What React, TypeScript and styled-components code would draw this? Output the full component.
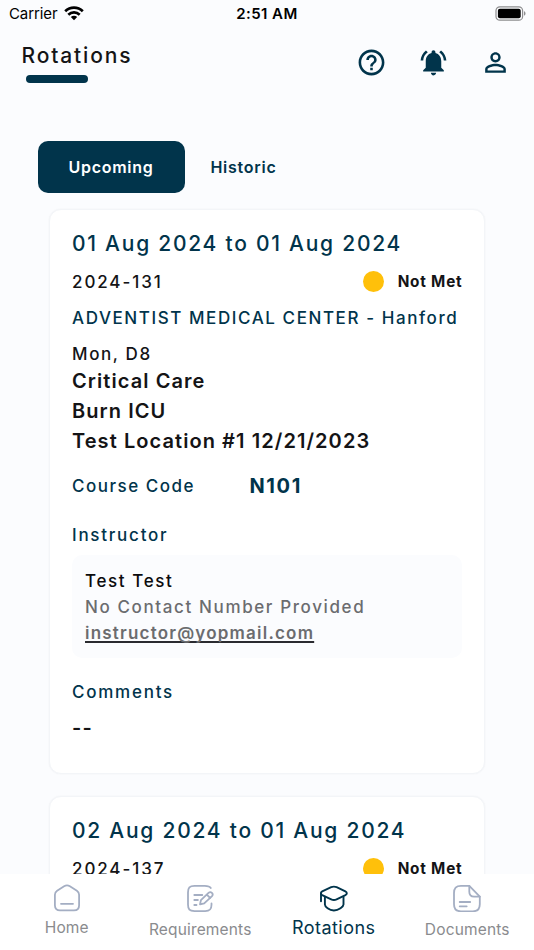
import React from 'react';
import styled, { createGlobalStyle } from 'styled-components';
import { MdHelpOutline, MdNotificationsActive, MdPersonOutline } from 'react-icons/md';

const NAVY = '#01344b';
const INK = '#141416';
const GRAY = '#6b6c6f';
const MUTED = '#a4aec3';

const GlobalStyle = createGlobalStyle`
  * { box-sizing: border-box; }
  body {
    margin: 0;
    background: #fbfcfe;
    font-family: Inter, 'Liberation Sans', sans-serif;
    -webkit-font-smoothing: antialiased;
  }
`;

const Screen = styled.div`
  display: flex;
  flex-direction: column;
  width: 534px;
  height: 950px;
  overflow: hidden;
  background: #fbfcfe;
`;

const StatusBar = styled.div`
  flex: none;
  display: grid;
  grid-template-columns: 1fr auto 1fr;
  align-items: center;
  height: 27px;
  padding: 0 8px 0 9px;
  color: #000;
`;

const Carrier = styled.div`
  display: flex;
  align-items: center;
  gap: 7px;
  font-size: 15px;
  letter-spacing: -0.1px;
`;

const Clock = styled.div`
  margin-left: -1px;
  font-size: 15px;
  font-weight: 600;
  letter-spacing: 0.43px;
`;

const BatterySlot = styled.div`
  display: flex;
  justify-content: flex-end;
`;

const Header = styled.header`
  flex: none;
  display: flex;
  justify-content: space-between;
  height: 114px;
  padding: 13px 23.5px 0 21.5px;
`;

const Title = styled.h1`
  margin: 0;
  padding-top: 1px;
  font-size: 21px;
  font-weight: 500;
  line-height: 30px;
  letter-spacing: 1.85px;
  color: ${INK};

  &::after {
    content: '';
    display: block;
    width: 62px;
    height: 8px;
    margin: 4.4px 0 0 4.5px;
    border-radius: 4px;
    background: ${NAVY};
  }
`;

const HeaderActions = styled.div`
  display: flex;
  gap: 31px;
  height: 31px;
  margin-top: 6.5px;
  color: ${NAVY};
`;

const Tabs = styled.div`
  flex: none;
  display: flex;
  height: 51.5px;
  padding-left: 37.5px;
`;

const Tab = styled.button<{ $active?: boolean }>`
  width: ${(p) => (p.$active ? '147px' : '118px')};
  padding: 0;
  border: 0;
  border-radius: 10px;
  background: ${(p) => (p.$active ? NAVY : 'transparent')};
  color: ${(p) => (p.$active ? '#fff' : NAVY)};
  font: 600 16px Inter, sans-serif;
  letter-spacing: 0.75px;
`;

const List = styled.main`
  flex: 1;
  min-height: 0;
  overflow: hidden;
  display: flex;
  flex-direction: column;
  gap: 22.5px;
  padding: 16.5px 49px 0;
`;

const Card = styled.article`
  flex: none;
  height: 564.5px;
  padding: 19px 22px 0 22px;
  border: 1px solid #f3f5f8;
  border-radius: 12px;
  background: #fff;
  box-shadow: 0 0 2px rgba(20, 30, 50, 0.05);
`;

const Dates = styled.h2`
  margin: 0 0 9px;
  font-size: 21px;
  font-weight: 500;
  line-height: 30px;
  letter-spacing: 1.75px;
  white-space: nowrap;
  color: ${NAVY};
`;

const StatusRow = styled.div`
  display: flex;
  align-items: center;
  height: 28px;
`;

const Text = styled.div<{ $navy?: boolean; $spacing?: number }>`
  font-size: 17px;
  font-weight: 500;
  line-height: 24px;
  letter-spacing: ${(p) => p.$spacing ?? 1.62}px;
  white-space: nowrap;
  color: ${(p) => (p.$navy ? NAVY : INK)};
`;

const Status = styled.div`
  display: flex;
  align-items: center;
  gap: 13.5px;
  height: 27px;
  margin: -1px -0.5px 0 auto;
  font-size: 15.3px;
  font-weight: 700;
  letter-spacing: 0.8px;
  color: ${INK};

  &::before {
    content: '';
    width: 21.5px;
    height: 21.5px;
    border-radius: 50%;
    background: #ffc00a;
  }
`;

const Site = styled.div`
  margin: 10px 0 12px;
`;

const Detail = styled.div`
  font-size: 20px;
  font-weight: 600;
  line-height: 29.8px;
  letter-spacing: 1.07px;
  color: ${INK};
`;

const Details = styled.div`
  padding-top: 1px;
`;

const CourseRow = styled.div`
  display: grid;
  grid-template-columns: 177.5px 1fr;
  align-items: center;
  height: 28px;
  margin: 15.7px 0 23px;
`;

const CourseCode = styled.div`
  font-size: 20px;
  font-weight: 700;
  letter-spacing: 1.6px;
  color: ${NAVY};
`;

const InstructorBox = styled.div`
  height: 102.5px;
  margin: 8px 0 22.5px;
  padding: 13px;
  border-radius: 10px;
  background: #fbfcfe;
`;

const InstructorLine = styled.div<{ $gray?: boolean }>`
  font-size: 17px;
  font-weight: 500;
  line-height: 26px;
  letter-spacing: 1.62px;
  white-space: nowrap;
  color: ${(p) => (p.$gray ? GRAY : '#0b0b0d')};
`;

const Email = styled.a`
  display: block;
  width: max-content;
  font-size: 17px;
  font-weight: 600;
  line-height: 26px;
  letter-spacing: 1.2px;
  color: ${GRAY};
  text-decoration: underline;
  text-decoration-color: #2a2b30;
  text-decoration-thickness: 1.5px;
  text-decoration-skip-ink: none;
  text-underline-offset: 2px;
`;

const Comment = styled(Detail)`
  margin-top: 10px;
`;

const BottomNav = styled.nav`
  flex: none;
  display: grid;
  grid-template-columns: repeat(4, 1fr);
  height: 76px;
  background: #fff;
`;

const NavItem = styled.a<{ $size: number; $drop: number; $active?: boolean }>`
  display: flex;
  flex-direction: column;
  align-items: center;
  padding-top: 10px;
  font-size: ${(p) => p.$size}px;
  font-weight: 400;
  line-height: 24px;
  letter-spacing: ${(p) => (p.$active ? 0.45 : 0.16)}px;
  color: ${(p) => (p.$active ? NAVY : '#8a8b8e')};

  svg {
    flex: none;
    fill: none;
    stroke: ${(p) => (p.$active ? NAVY : MUTED)};
    stroke-width: ${(p) => (p.$active ? 1.9 : 1.8)};
    stroke-linecap: round;
    stroke-linejoin: round;
    margin-bottom: ${(p) => p.$drop}px;
  }
`;

const WifiIcon = () => (
  <svg width="20" height="16" viewBox="0 0 20 16" fill="none" stroke="#000" strokeWidth="2.7">
    <path d="M1.2 5.2C6.2.4 13.8.4 18.8 5.2" />
    <path d="M4.3 8.7C7.5 5.7 12.5 5.7 15.7 8.7" />
    <path d="M6.8 11c1.9-1.6 4.5-1.6 6.4 0L10 14.3z" fill="#000" stroke="none" />
  </svg>
);

const BatteryIcon = () => (
  <svg width="31" height="15" viewBox="0 0 31 15">
    <rect x="1" y=".8" width="26.6" height="13.4" rx="3.8" fill="none" stroke="#8d8d8f" strokeWidth="1.2" />
    <rect x="2.9" y="2.7" width="22.8" height="9.6" rx="2" />
    <path d="M29 5.3c2 .7 2 3.7 0 4.4z" fill="#8d8d8f" />
  </svg>
);

const HomeIcon = () => (
  <svg width="28" height="28" viewBox="0 0 28 28">
    <path d="M1.9 10.8c0-1.9.7-3.1 2.2-4.1l7-4.5c1.9-1.1 3.9-1.1 5.8 0l7 4.5c1.5 1 2.2 2.2 2.2 4.1v10.5c0 3.3-1.9 5.1-5.1 5.1H7c-3.2 0-5.1-1.8-5.1-5.1z" />
    <path d="M8 19.8h12" />
  </svg>
);

const RequirementsIcon = () => (
  <svg width="28" height="28" viewBox="0 0 28 28">
    <path d="M24.8 4C23.6 2 21.4 1.8 18.8 1.8H8.5C3.5 1.8 2 3.5 2 8.5v12c0 5 1.5 6.6 6.5 6.6h10.7c4.7 0 6.3-1.6 6.3-6.3v-1.3" />
    <path d="M8.3 11h8M8.3 16h3.6M8.3 21h2.2" />
    <path d="M14 20.4l.9-4.2 7.6-7.3c1.2-1.1 2.4-1 3.4 0s1 2.3-.1 3.4l-7.6 7.1zM20.8 10.7l3.4 3.3" />
  </svg>
);

const RotationsIcon = () => (
  <svg width="28" height="28" viewBox="0 0 28 28">
    <path d="M2.2 7.4l9-4.2c2-.9 3.4-.9 5.4 0l8.8 4.2c1.9.9 1.9 2.7 0 3.7l-8.8 4.2c-2 1-3.4 1-5.4 0l-9-4.2c-1.7-1-1.7-2.9 0-3.7z" />
    <path d="M4.9 12.8v7.7c0 2.1 4.2 6 9 6s9.6-3.9 9.6-6v-7.7" />
    <path d="M1 9.6v7.6" />
  </svg>
);

const DocumentsIcon = () => (
  <svg width="28" height="28" viewBox="0 0 28 28">
    <path d="M16.3 1.8H8C3 1.8 1 4 1 9v11.2c0 5 2 7.1 7 7.1h11.8c5 0 7-2.1 7-7.1v-7.6z" />
    <path d="M16.3 1.8v5.9c0 3.5 1.3 4.9 4.8 4.9h5.7" />
    <path d="M6.7 18h10.5M6.7 22.3h7" />
  </svg>
);

interface Rotation {
  dates: string;
  code: string;
}

const rotations: Rotation[] = [
  { dates: '01 Aug 2024 to 01 Aug 2024', code: '2024-131' },
  { dates: '02 Aug 2024 to 01 Aug 2024', code: '2024-137' },
];

const RotationCard = ({ dates, code }: Rotation) => (
  <Card>
    <Dates>{dates}</Dates>
    <StatusRow>
      <Text $spacing={1.9}>{code}</Text>
      <Status>Not Met</Status>
    </StatusRow>
    <Site>
      <Text $navy $spacing={1.58}>ADVENTIST MEDICAL CENTER - Hanford</Text>
    </Site>
    <Text>Mon, D8</Text>
    <Details>
      <Detail>Critical Care</Detail>
      <Detail>Burn ICU</Detail>
      <Detail>Test Location #1 12/21/2023</Detail>
    </Details>
    <CourseRow>
      <Text $navy $spacing={1.5}>Course Code</Text>
      <CourseCode>N101</CourseCode>
    </CourseRow>
    <Text $navy $spacing={1.75}>Instructor</Text>
    <InstructorBox>
      <InstructorLine>Test Test</InstructorLine>
      <InstructorLine $gray>No Contact Number Provided</InstructorLine>
      <Email>instructor@yopmail.com</Email>
    </InstructorBox>
    <Text $navy $spacing={1.75}>Comments</Text>
    <Comment>--</Comment>
  </Card>
);

export default function App() {
  return (
    <Screen>
      <GlobalStyle />
      <StatusBar>
        <Carrier>
          Carrier
          <WifiIcon />
        </Carrier>
        <Clock>2:51 AM</Clock>
        <BatterySlot>
          <BatteryIcon />
        </BatterySlot>
      </StatusBar>
      <Header>
        <Title>Rotations</Title>
        <HeaderActions>
          <MdHelpOutline size={31} />
          <MdNotificationsActive size={31} />
          <MdPersonOutline size={31} />
        </HeaderActions>
      </Header>
      <Tabs>
        <Tab $active>Upcoming</Tab>
        <Tab>Historic</Tab>
      </Tabs>
      <List>
        {rotations.map((rotation) => (
          <RotationCard key={rotation.code} {...rotation} />
        ))}
      </List>
      <BottomNav>
        <NavItem $size={15.5} $drop={4}>
          <HomeIcon />
          Home
        </NavItem>
        <NavItem $size={15.5} $drop={6}>
          <RequirementsIcon />
          Requirements
        </NavItem>
        <NavItem $size={18} $drop={4} $active>
          <RotationsIcon />
          Rotations
        </NavItem>
        <NavItem $size={15.5} $drop={6}>
          <DocumentsIcon />
          Documents
        </NavItem>
      </BottomNav>
    </Screen>
  );
}
